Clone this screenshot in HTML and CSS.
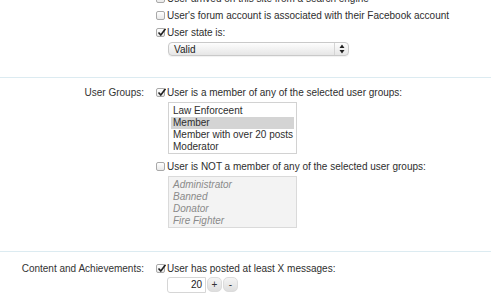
FILE: index.html
```html
<!DOCTYPE html>
<html>
<head>
<meta charset="utf-8">
<link rel="stylesheet" href="styles.css">
</head>
<body>
<div class="page">
  <section class="sect first">
    <div class="lbl"></div>
    <div class="ctl">
      <div class="row"><span class="cb"></span>User arrived on this site from a search engine</div>
      <div class="row"><span class="cb"></span>User's forum account is associated with their Facebook account</div>
      <div class="row"><span class="cb on"><svg viewBox="0 0 9 9" width="9" height="9"><path d="M1.5 4.5 L3.8 7 L8.5 0.8" fill="none" stroke="#222" stroke-width="1.6"/></svg></span>User state is:</div>
      <div class="select"><span class="sel-text">Valid</span><span class="sel-arrows"><svg viewBox="0 0 6 10" width="6" height="10"><path d="M3 0.5 L5.5 4 L0.5 4 Z M3 9.5 L5.5 6 L0.5 6 Z" fill="#222"/></svg></span></div>
    </div>
  </section>
  <section class="sect groups">
    <div class="lbl">User Groups:</div>
    <div class="ctl">
      <div class="row"><span class="cb on"><svg viewBox="0 0 9 9" width="9" height="9"><path d="M1.5 4.5 L3.8 7 L8.5 0.8" fill="none" stroke="#222" stroke-width="1.6"/></svg></span>User is a member of any of the selected user groups:</div>
      <div class="list">
        <div class="opt">Law Enforceent</div>
        <div class="opt sel">Member</div>
        <div class="opt">Member with over 20 posts</div>
        <div class="opt">Moderator</div>
      </div>
      <div class="row row2"><span class="cb"></span>User is NOT a member of any of the selected user groups:</div>
      <div class="list disabled">
        <div class="opt">Administrator</div>
        <div class="opt">Banned</div>
        <div class="opt">Donator</div>
        <div class="opt">Fire Fighter</div>
      </div>
    </div>
  </section>
  <section class="sect content">
    <div class="lbl">Content and Achievements:</div>
    <div class="ctl">
      <div class="row"><span class="cb on"><svg viewBox="0 0 9 9" width="9" height="9"><path d="M1.5 4.5 L3.8 7 L8.5 0.8" fill="none" stroke="#222" stroke-width="1.6"/></svg></span>User has posted at least X messages:</div>
      <div class="spin">
        <div class="num">20</div>
        <div class="btn">+</div>
        <div class="btn">-</div>
      </div>
    </div>
  </section>
</div>
</body>
</html>
```
FILE: styles.css
```css
html, body {
  margin: 0;
  padding: 0;
  background: #ffffff;
}
body {
  font-family: "Liberation Sans", Arial, sans-serif;
  font-size: 10px;
  color: #2e2e2e;
  width: 491px;
  height: 300px;
  overflow: hidden;
}
.page {
  display: flex;
  flex-direction: column;
}
.sect {
  display: grid;
  grid-template-columns: 144px 1fr;
  column-gap: 12px;
  border-bottom: 1px solid #dcebf1;
}
.sect.first {
  margin-top: -10px;
  padding-bottom: 21px;
}
.sect.groups {
  padding-top: 6px;
  padding-bottom: 23px;
}
.sect.content {
  padding-top: 8px;
  border-bottom: none;
}
.lbl {
  text-align: right;
  line-height: 17px;
  color: #333;
}
.ctl {
  display: flex;
  flex-direction: column;
  align-items: flex-start;
}
.row {
  display: flex;
  align-items: center;
  height: 17px;
  white-space: nowrap;
}
.cb {
  width: 7px;
  height: 7px;
  border: 1px solid #a9a9a9;
  border-radius: 2px;
  background: linear-gradient(#ffffff, #e9e9e9);
  margin-right: 2px;
  position: relative;
  flex: none;
}
.cb svg {
  position: absolute;
  left: 0;
  top: -1px;
}
.select {
  margin-left: 12px;
  margin-top: 1px;
  width: 179px;
  height: 12px;
  border: 1px solid #c9c9c9;
  border-radius: 4px;
  background: linear-gradient(#fdfdfd, #e6e6e6);
  display: flex;
  align-items: center;
  box-shadow: 0 1px 1px rgba(0,0,0,0.06);
}
.sel-text {
  flex: 1;
  padding-left: 5px;
  color: #222;
}
.sel-arrows {
  width: 13px;
  height: 12px;
  border-left: 1px solid #d4d4d4;
  display: flex;
  align-items: center;
  justify-content: center;
}
.list {
  margin-left: 12px;
  margin-top: 1px;
  width: 127px;
  border: 1px solid #d2d2d2;
  padding-top: 2px;
  height: 48px;
  background: #fff;
}
.list .opt {
  height: 12px;
  line-height: 12px;
  margin: 0 2px;
  padding-left: 2px;
  white-space: nowrap;
}
.list .opt.sel {
  background: #d4d4d4;
}
.list.disabled {
  background: #f3f3f3;
  border-color: #dadada;
  color: #8a8a8a;
  font-style: italic;
}
.row2 {
  margin-top: 4px;
}
.spin {
  display: flex;
  margin-left: 11px;
  gap: 1px;
}
.num {
  width: 34px;
  height: 14px;
  border: 1px solid #d6d6d6;
  border-radius: 3px 0 0 3px;
  text-align: right;
  padding-right: 3px;
  line-height: 14px;
  color: #222;
}
.btn {
  width: 15px;
  height: 15px;
  border-radius: 5px;
  background: linear-gradient(#f4f4f4, #dedede);
  border: 1px solid #dcdcdc;
  box-sizing: border-box;
  text-align: center;
  line-height: 13px;
  font-size: 10px;
  color: #333;
}
```
